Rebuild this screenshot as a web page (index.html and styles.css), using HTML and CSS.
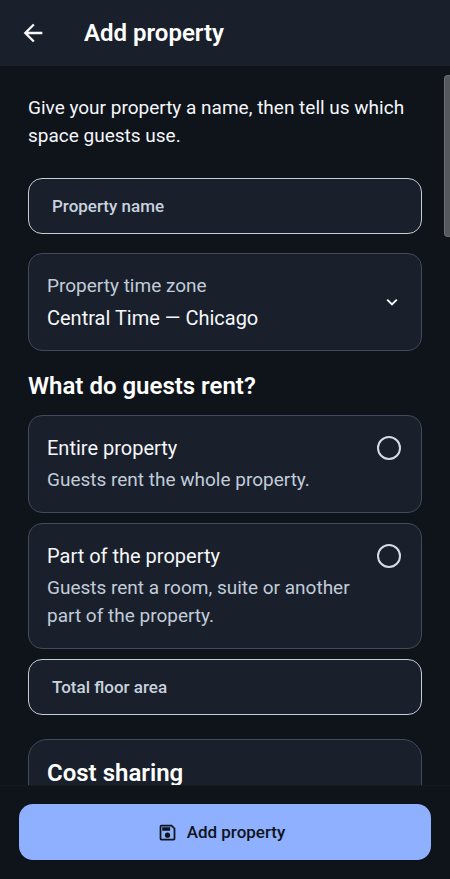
FILE: index.html
```html
<!DOCTYPE html>
<html lang="en">
<head>
    <meta charset="UTF-8">
    <meta name="viewport" content="width=device-width, initial-scale=1">
    <title>Add property</title>
    <link rel="stylesheet" href="styles.css">
</head>
<body>
    <header class="top-bar">
        <button class="back" type="button" aria-label="Back">
            <svg width="28" height="28" viewBox="0 0 24 24" fill="currentColor"><path d="M20 11H7.83l5.59-5.59L12 4l-8 8 8 8 1.41-1.41L7.83 13H20z"/></svg>
        </button>
        <h1>Add property</h1>
    </header>

    <div class="content">
        <form class="form" id="propertyForm">
            <p class="intro">Give your property a name, then tell us which space guests use.</p>

            <div class="field">
                <label for="propertyName">Property name</label>
                <input type="text" id="propertyName" placeholder=" ">
            </div>

            <div class="card timezone">
                <div class="card-text">
                    <label class="muted" for="timezone">Property time zone</label>
                    <select id="timezone">
                        <option>Central Time — Chicago</option>
                        <option>Eastern Time — New York</option>
                        <option>Pacific Time — Los Angeles</option>
                    </select>
                </div>
                <svg class="chevron" width="18" height="18" viewBox="0 0 18 18" fill="none" stroke="currentColor" stroke-width="2"><path d="M4.2 6.6L9 11.4l4.8-4.8"/></svg>
            </div>

            <h2 id="rentTitle">What do guests rent?</h2>

            <div class="options" role="radiogroup" aria-labelledby="rentTitle">
                <label class="card" for="entire">
                    <span class="card-text">
                        <span>Entire property</span>
                        <span class="muted">Guests rent the whole property.</span>
                    </span>
                    <input type="radio" name="rent" id="entire">
                </label>
                <label class="card" for="part">
                    <span class="card-text">
                        <span>Part of the property</span>
                        <span class="muted">Guests rent a room, suite or another part of the property.</span>
                    </span>
                    <input type="radio" name="rent" id="part">
                </label>
                <div class="field">
                    <label for="floorArea">Total floor area</label>
                    <input type="text" id="floorArea" placeholder=" ">
                </div>
            </div>

            <section class="card cost">
                <h2>Cost sharing</h2>
            </section>
        </form>
        <div class="scroll-thumb"></div>
    </div>

    <footer class="bottom-bar">
        <button class="submit" type="submit" form="propertyForm">
            <svg width="21" height="21" viewBox="0 0 24 24" fill="currentColor"><path d="M17 3H5a2 2 0 0 0-2 2v14a2 2 0 0 0 2 2h14a2 2 0 0 0 2-2V7zm2 16H5V5h11.17L19 7.83zM12 12a3 3 0 1 0 0 6 3 3 0 0 0 0-6zM6 6h9v4H6z"/></svg>
            Add property
        </button>
    </footer>
</body>
</html>
```
FILE: styles.css
```css
* {
    box-sizing: border-box;
}
body {
    margin: 0;
    height: 100vh;
    display: flex;
    flex-direction: column;
    font-family: Roboto, sans-serif;
    font-size: 20px;
    line-height: 28px;
    color: #f5f7fa;
    background-color: #0f131a;
}
h1, h2, p {
    margin: 0;
}
h1, h2 {
    font-size: 24px;
    line-height: 30px;
    font-weight: 600;
    color: #fff;
}
button, input, select {
    font-family: inherit;
    color: inherit;
}
.top-bar {
    display: flex;
    align-items: center;
    gap: 37px;
    padding: 18px 19px;
    background-color: #1a202b;
}
.back {
    display: flex;
    padding: 0;
    border: none;
    background: none;
    cursor: pointer;
}
.content {
    position: relative;
    flex: 1;
    min-height: 0;
}
.form {
    height: 100%;
    overflow-y: auto;
    scrollbar-width: none;
    padding: 28px;
}
.scroll-thumb {
    position: absolute;
    top: 9px;
    right: 0;
    width: 6px;
    height: 162px;
    border: 1px solid #6b6e72;
    border-right: none;
    border-radius: 4px 0 0 4px;
    background-color: #55585c;
}
.intro {
    margin-bottom: 28px;
    font-size: 19px;
}
.field {
    display: grid;
    align-items: center;
}
.field label,
.field input {
    grid-area: 1 / 1;
}
.field label {
    z-index: 1;
    padding: 0 24px;
    font-size: 17px;
    font-weight: 500;
    color: #c8d2df;
    pointer-events: none;
}
.field input {
    width: 100%;
    height: 56px;
    padding: 0 24px;
    font-size: 17px;
    border: 1px solid #c3ccd8;
    border-radius: 14px;
    background-color: #1a202b;
}
.field input:not(:placeholder-shown) {
    padding-top: 16px;
}
.field:has(input:not(:placeholder-shown)) label {
    align-self: start;
    font-size: 12px;
}
.card {
    display: flex;
    align-items: flex-start;
    gap: 18px;
    padding: 18px 20px 18px 18px;
    border: 1px solid #3f4b5c;
    border-radius: 14px;
    background-color: #1a202b;
}
.card-text {
    flex: 1;
    display: flex;
    flex-direction: column;
    gap: 4px;
}
.muted {
    font-size: 19px;
    color: #c1ccda;
}
.timezone {
    align-items: center;
    margin: 19px 0 20px;
}
.timezone select {
    appearance: none;
    width: 100%;
    height: 28px;
    padding: 0;
    border: none;
    background: none;
    font-size: 20px;
}
.options {
    display: flex;
    flex-direction: column;
    gap: 10px;
    margin: 14px 0 24px;
}
.card input {
    appearance: none;
    width: 24px;
    height: 24px;
    margin: 2px 0;
    border: 2px solid #d2dbe6;
    border-radius: 50%;
}
.card input:checked {
    border-width: 7px;
    border-color: #8fb0ff;
}
.cost {
    min-height: 200px;
    border-radius: 19px;
}
.bottom-bar {
    padding: 18px 19px 19px;
    border-top: 1px solid #151a21;
    background-color: #0f131a;
}
.submit {
    display: flex;
    align-items: center;
    justify-content: center;
    gap: 9px;
    width: 100%;
    height: 56px;
    padding: 0 18px 0 10px;
    border: none;
    border-radius: 14px;
    background-color: #8fb0ff;
    color: #0f131a;
    font-size: 17px;
    font-weight: 500;
    cursor: pointer;
}
```
